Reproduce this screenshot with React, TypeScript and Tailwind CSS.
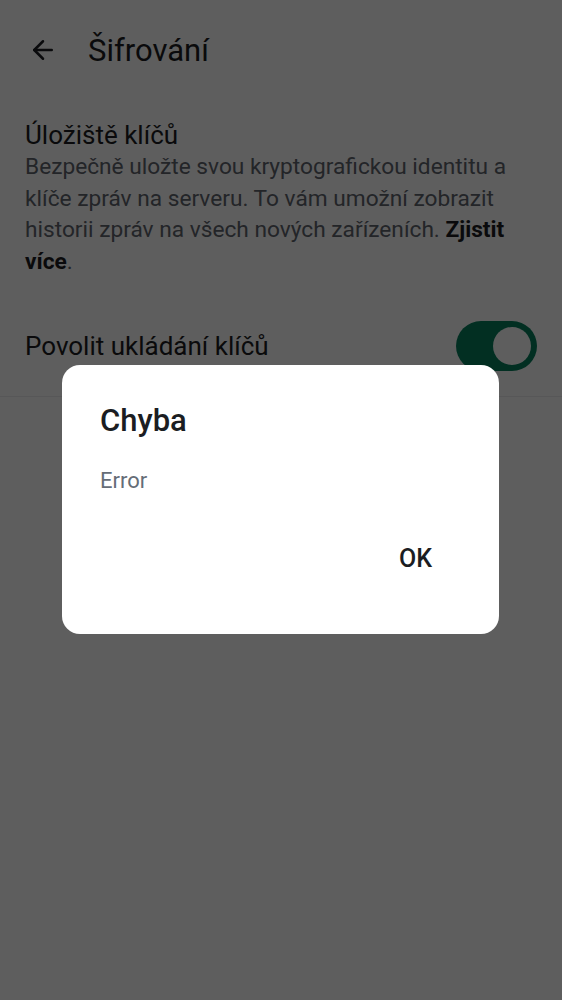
import { ArrowLeft } from 'lucide-react';

export default function App() {
  return (
    <div className="relative w-[562px] h-[1000px] bg-white overflow-hidden font-['Roboto',sans-serif] text-[#1b1d22]">
      {/* Header */}
      <div className="flex items-center h-[100px] px-[28px] gap-[30px]">
        <ArrowLeft className="w-[30px] h-[30px]" strokeWidth={2} />
        <span className="text-[31px] leading-none">Šifrování</span>
      </div>

      {/* Key storage section */}
      <div className="px-[25px] pt-[19px]">
        <p className="text-[26px] leading-[32px]">Úložiště klíčů</p>
        <p className="text-[22.7px] leading-[31.7px] text-[#5f656e]">
          Bezpečně uložte svou kryptografickou identitu a klíče zpráv na serveru. To vám umožní zobrazit historii zpráv na všech nových zařízeních.{' '}
          <span className="font-bold text-[#1b1d22]">Zjistit více</span>.
        </p>
      </div>

      {/* Toggle row */}
      <div className="flex items-center justify-between px-[25px] mt-[18px] pt-[25px] pb-[25px] border-b border-[#ebedef]">
        <span className="text-[26px] leading-[32px]">Povolit ukládání klíčů</span>
        <div className="w-[81px] h-[50px] rounded-full bg-[#077f5e] flex items-center justify-end px-[6px]">
          <div className="w-[38px] h-[38px] rounded-full bg-white" />
        </div>
      </div>

      {/* Scrim */}
      <div className="absolute inset-0 bg-black/[0.63]" />

      {/* Dialog */}
      <div className="absolute left-[62px] top-[365px] w-[437px] h-[269px] bg-white rounded-[18px] px-[38px] pt-[38px] flex flex-col">
        <p className="text-[31px] font-medium leading-[36px] text-[#1b1d22]">Chyba</p>
        <p className="mt-[28px] text-[22px] leading-[28px] text-[#656d77]">Error</p>
        <div className="flex justify-end mt-[49px] pr-[29px]">
          <span className="text-[25px] leading-[30px] font-medium text-[#1b1d22]">OK</span>
        </div>
      </div>
    </div>
  );
}
